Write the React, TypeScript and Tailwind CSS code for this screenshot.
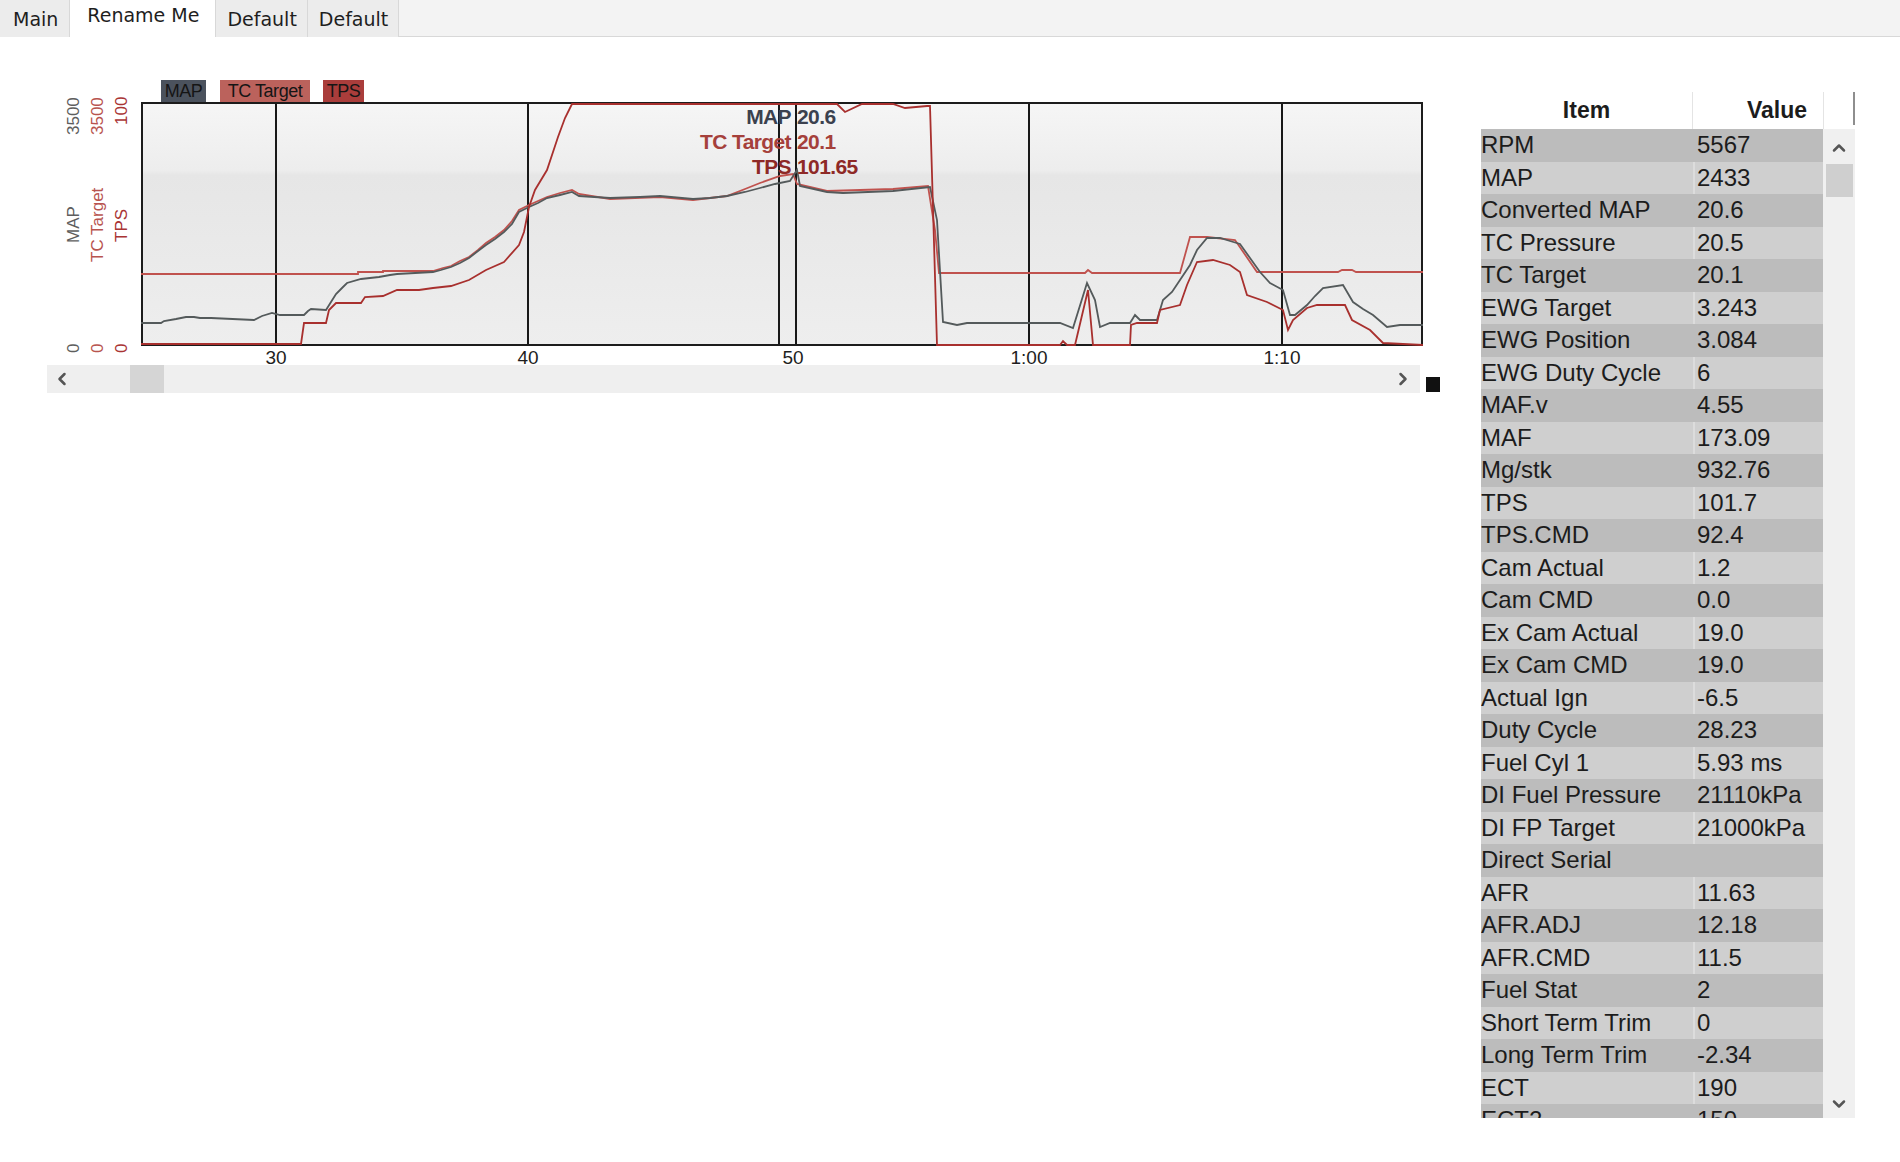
import { ChevronDown, ChevronLeft, ChevronRight, ChevronUp } from "lucide-react";

const tabs = [
  { label: "Main", active: false, pad: "pl-[13px] pr-[11px]" },
  { label: "Rename Me", active: true, pad: "pl-[17px] pr-[16px]" },
  { label: "Default", active: false, pad: "pl-[11px] pr-[10px]" },
  { label: "Default", active: false, pad: "pl-[11px] pr-[10px]" },
];

const rows: [string, string][] = [
  ["RPM", "5567"],
  ["MAP", "2433"],
  ["Converted MAP", "20.6"],
  ["TC Pressure", "20.5"],
  ["TC Target", "20.1"],
  ["EWG Target", "3.243"],
  ["EWG Position", "3.084"],
  ["EWG Duty Cycle", "6"],
  ["MAF.v", "4.55"],
  ["MAF", "173.09"],
  ["Mg/stk", "932.76"],
  ["TPS", "101.7"],
  ["TPS.CMD", "92.4"],
  ["Cam Actual", "1.2"],
  ["Cam CMD", "0.0"],
  ["Ex Cam Actual", "19.0"],
  ["Ex Cam CMD", "19.0"],
  ["Actual Ign", "-6.5"],
  ["Duty Cycle", "28.23"],
  ["Fuel Cyl 1", "5.93 ms"],
  ["DI Fuel Pressure", "21110kPa"],
  ["DI FP Target", "21000kPa"],
  ["Direct Serial", ""],
  ["AFR", "11.63"],
  ["AFR.ADJ", "12.18"],
  ["AFR.CMD", "11.5"],
  ["Fuel Stat", "2"],
  ["Short Term Trim", "0"],
  ["Long Term Trim", "-2.34"],
  ["ECT", "190"],
  ["ECT2", "150"],
];

// plot coords are page pixels (viewBox starts at 141,102)
const mapLine =
  "141,323 161,323 164,321 176,319 186,317 194,317 200,318 211,318 254,320 262,316 272,313 280,315 304,315 308,311 311,309 326,310 331,302 336,294 342,288 347,283 361,279 379,277 390,275 397,274 433,272 441,270 451,267 460,263 469,258 478,251 486,245 495,239 504,232 512,224 519,212 529,207 538,203 547,198 560,195 572,192 579,196 610,198 640,197 660,196 693,199 710,198 727,196 745,192 760,188 775,184 790,181 797,170 800,186 827,192 843,193 893,191 930,187 937,220 943,322 957,325 967,323 1060,323 1073,328 1087,283 1095,300 1100,327 1110,323 1130,323 1135,315 1140,320 1157,320 1163,300 1172,292 1180,280 1190,265 1197,250 1207,238 1220,238 1230,241 1240,244 1250,258 1260,272 1270,283 1283,290 1290,315 1295,315 1307,305 1315,296 1323,288 1343,285 1353,302 1363,309 1373,315 1387,327 1400,325 1423,325";

const tcLine =
  "141,274 358,274 358,272 383,272 383,271 433,271 443,268 451,266 460,261 469,257 478,250 486,243 495,237 504,230 512,221 519,210 529,205 538,201 547,197 560,193 572,190 579,194 610,199 660,197 693,200 727,196 745,189 760,183 780,176 793,174 797,184 827,191 893,189 928,186 935,230 939,273 1085,273 1088,270 1092,273 1180,273 1190,237 1207,237 1235,240 1257,272 1338,272 1342,270 1352,270 1356,272 1423,272";

const tpsLine =
  "141,344 301,344 304,323 326,323 329,310 336,303 361,303 365,297 383,296 397,290 419,290 433,288 451,286 469,280 486,270 504,262 519,245 524,232 529,207 535,190 547,170 558,137 565,118 572,104 837,104 845,112 862,104 893,104 905,108 927,106 930,106 937,345 1060,345 1063,341 1067,345 1075,345 1088,290 1093,345 1130,345 1131,325 1137,323 1157,323 1160,310 1180,305 1187,285 1197,262 1213,260 1230,265 1240,272 1247,295 1267,302 1283,310 1288,330 1293,320 1307,308 1317,305 1345,305 1352,320 1370,330 1383,343 1423,345";

const gridX = [276, 528, 779, 796, 1029, 1282];
const ticks: [string, number][] = [
  ["30", 276],
  ["40", 528],
  ["50", 793],
  ["1:00", 1029],
  ["1:10", 1282],
];

const axes = [
  { top: "3500", label: "MAP", color: "text-[#5e5e5e]" },
  { top: "3500", label: "TC Target", color: "text-[#b8544f]" },
  { top: "100", label: "TPS", color: "text-[#a93434]" },
];

const Chart = () => {
  return (
    <div className="flex flex-col w-[1393px] ml-[47px] mt-[43px] font-['Liberation_Sans',Arial,sans-serif]">
      {/* legend */}
      <div className="flex items-end h-[22px] pl-[114px] text-[18px] leading-[22px] text-[#151515] tracking-tight">
        <div className="w-[45px] h-[22px] bg-[#4b525d] text-center">MAP</div>
        <div className="w-[90px] h-[22px] ml-[14px] bg-[#bb625c] text-center">TC Target</div>
        <div className="w-[41px] h-[22px] ml-[13px] bg-[#aa3d3b] text-center">TPS</div>
      </div>

      {/* axis labels + plot */}
      <div className="flex items-start pl-[16px]">
        <div className="flex gap-[2px] -mt-[5px] -mb-[7px]">
          {axes.map((a) => (
            <div
              key={a.label}
              className={`[writing-mode:vertical-rl] rotate-180 flex items-center h-[256px] w-[22px] text-[17px] leading-[22px] ${a.color}`}
            >
              <span className="flex-1 text-start">0</span>
              <span>{a.label}</span>
              <span className="flex-1 text-end">{a.top}</span>
            </div>
          ))}
        </div>

        <div className="relative ml-[8px] w-[1282px] h-[244px]">
          <svg width="1282" height="244" viewBox="141 102 1282 244" className="block">
            <defs>
              <linearGradient id="plotbg" x1="0" y1="0" x2="0" y2="1">
                <stop offset="0%" stopColor="#f6f6f6" />
                <stop offset="28%" stopColor="#ededed" />
                <stop offset="30%" stopColor="#e6e6e6" />
                <stop offset="100%" stopColor="#eeeeee" />
              </linearGradient>
            </defs>
            <rect x="141" y="102" width="1282" height="244" fill="url(#plotbg)" />
            {gridX.map((x) => (
              <line key={x} x1={x} y1="102" x2={x} y2="346" stroke="#181818" strokeWidth="2" />
            ))}
            <rect x="142" y="103" width="1280" height="242" fill="none" stroke="#1c1c1c" strokeWidth="2" />
            <polyline points={tcLine} fill="none" stroke="#c0524e" strokeWidth="1.8" />
            <polyline points={mapLine} fill="none" stroke="#545a5b" strokeWidth="1.8" />
            <polyline points={tpsLine} fill="none" stroke="#a8302e" strokeWidth="1.8" />
          </svg>

          {/* cursor readout */}
          <div className="absolute top-[2px] right-[632px] text-right text-[21px] leading-[25px] font-bold tracking-[-0.6px]">
            <div className="text-[#3b414e]">MAP</div>
            <div className="text-[#a5403b]">TC Target</div>
            <div className="text-[#8e2926]">TPS</div>
          </div>
          <div className="absolute top-[2px] left-[656px] text-[21px] leading-[25px] font-bold tracking-[-0.6px]">
            <div className="text-[#3b414e]">20.6</div>
            <div className="text-[#a5403b]">20.1</div>
            <div className="text-[#8e2926]">101.65</div>
          </div>
        </div>
      </div>

      {/* x ticks */}
      <div className="relative h-[19px] ml-[94px] w-[1282px] text-[19px] leading-[20px] text-[#1e1e1e]">
        {ticks.map(([t, x]) => (
          <span key={t} className="absolute top-[2px] -translate-x-1/2" style={{ left: x - 141 }}>
            {t}
          </span>
        ))}
      </div>

      {/* scrollbar */}
      <div className="flex items-start">
        <div className="flex items-center w-[1373px] h-[28px] bg-[#efefef]">
          <ChevronLeft size={20} strokeWidth={3} className="ml-[5px] text-[#555]" />
          <div className="ml-[58px] w-[34px] h-[28px] bg-[#d5d5d5]" />
          <div className="flex-1" />
          <ChevronRight size={20} strokeWidth={3} className="mr-[7px] text-[#555]" />
        </div>
        <div className="ml-[6px] mt-[12px] w-[14px] h-[15px] bg-[#111]" />
      </div>
    </div>
  );
};

const ValueTable = () => {
  return (
    <div className="flex flex-col w-[374px] ml-[41px] mt-[55px] font-['Liberation_Sans',Arial,sans-serif] text-[#1c1c1c]">
      <div className="flex h-[37px] bg-white text-[23px] font-bold leading-[37px]">
        <div className="w-[212px] text-center border-r border-[#e4e4e4]">Item</div>
        <div className="w-[131px] text-right pr-[16px] border-r border-[#e4e4e4]">Value</div>
        <div className="w-[31px] h-[33px] border-r-2 border-[#8e8e8e]" />
      </div>
      <div className="flex h-[989px]">
        <div className="w-[342px] overflow-hidden text-[24px]">
          {rows.map(([k, v], i) => {
            const dark = i % 2 === 0;
            return (
              <div
                key={k}
                className={`flex items-center h-[32.5px] leading-[32px] ${dark ? "bg-[#bcbcbc]" : "bg-[#cfcfcf]"}`}
              >
                <div className="w-[212px] whitespace-nowrap">{k}</div>
                <div
                  className={`flex-1 h-full pl-[2px] border-l-2 whitespace-nowrap ${
                    dark ? "border-[#bcbcbc]" : "border-[#dcdcdc]"
                  }`}
                >
                  {v}
                </div>
              </div>
            );
          })}
        </div>
        <div className="flex flex-col items-center w-[32px] bg-[#f0f0f0]">
          <ChevronUp size={20} strokeWidth={3} className="mt-[9px] text-[#555]" />
          <div className="mt-[6px] w-[27px] h-[33px] bg-[#cfcfcf]" />
          <div className="flex-1" />
          <ChevronDown size={20} strokeWidth={3} className="mb-[4px] text-[#555]" />
        </div>
      </div>
    </div>
  );
};

export default function App() {
  return (
    <div className="w-[1900px] h-[1162px] bg-white overflow-hidden">
      <div className="flex h-[37px] bg-[#f3f3f3] border-b border-[#d8d8d8] font-['DejaVu_Sans',Verdana,sans-serif] text-[19px] text-[#1e1e1e]">
        {tabs.map((t, i) => (
          <div
            key={i}
            className={`flex h-[37px] border-r border-[#d8d8d8] ${t.pad} ${
              t.active ? "bg-white items-start pt-[1px] -mb-px" : "bg-[#ececec] items-center pt-[2px] h-[36px]"
            }`}
          >
            {t.label}
          </div>
        ))}
      </div>
      <div className="flex items-start">
        <Chart />
        <ValueTable />
      </div>
    </div>
  );
}
